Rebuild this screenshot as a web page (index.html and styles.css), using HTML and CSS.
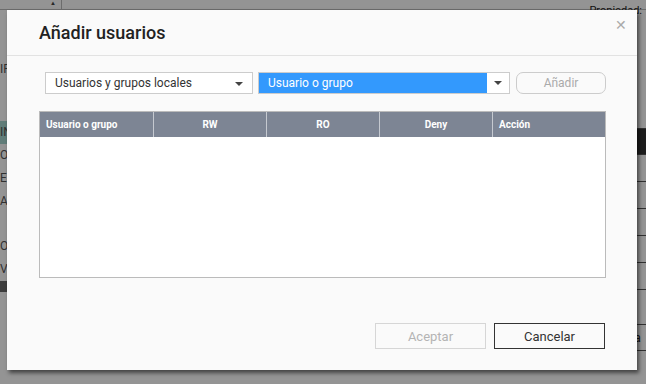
FILE: index.html
```html
<!doctype html>
<html>
<head>
<meta charset="utf-8">
<title>Añadir usuarios</title>
<link rel="stylesheet" href="styles.css">
</head>
<body>
<div class="backdrop">
	<div class="topbar">
		<span class="sort">&#9650;</span>
		<span class="prop">Propiedad:</span>
	</div>
	<div class="bg-main">
		<ul class="side">
			<li class="gap1">IP</li>
			<li class="sel">IN</li>
			<li>OF</li>
			<li>E</li>
			<li>AI</li>
			<li class="gap2">OI</li>
			<li>V</li>
			<li class="band"></li>
		</ul>
		<ul class="rows">
			<li class="r1"></li>
			<li class="dark"></li>
			<li></li>
			<li></li>
			<li></li>
			<li></li>
			<li></li>
			<li class="r2"></li>
			<li class="last">ca</li>
		</ul>
	</div>
	<div class="shade"></div>
</div>

<div class="dialog">
	<div class="dlg-head">
		<h2>Añadir usuarios</h2>
		<span class="close">&#10005;</span>
	</div>
	<div class="toolbar">
		<div class="select s1">
			<span>Usuarios y grupos locales</span>
			<i class="caret"></i>
		</div>
		<div class="select s2">
			<span class="val">Usuario o grupo</span>
			<span class="drop"><i class="caret"></i></span>
		</div>
		<button class="btn-add">Añadir</button>
	</div>
	<div class="grid">
		<div class="grid-head">
			<div class="col left">Usuario o grupo</div>
			<div class="col">RW</div>
			<div class="col">RO</div>
			<div class="col">Deny</div>
			<div class="col left">Acción</div>
		</div>
		<div class="grid-body"></div>
	</div>
	<div class="dlg-foot">
		<button class="btn ok">Aceptar</button>
		<button class="btn cancel">Cancelar</button>
	</div>
</div>
</body>
</html>
```

FILE: styles.css
```css
*{margin:0;padding:0;box-sizing:border-box}
body{background:#fff;font-family:Roboto,"Liberation Sans",sans-serif;width:646px;height:384px;overflow:hidden;position:relative}
ul{list-style:none}

/* page behind the dialog */
.backdrop{width:646px;height:384px;background:#fff;position:relative}
.topbar{height:10px;display:flex;align-items:flex-end;border-bottom:1px solid #bbb;padding-left:50px}
.topbar .sort{font-size:6px;color:#444;line-height:8px;width:12px;border-right:1px solid #bbb;height:10px}
.topbar .prop{margin-left:auto;font-size:11px;color:#222;line-height:12px;margin-right:4px;transform:translateY(8px)}
.bg-main{display:flex;justify-content:space-between}
.side{width:20px;font-size:12px;color:#555;padding-top:48px}
.side li{height:23px;line-height:23px;white-space:nowrap;overflow:hidden}
.side .gap1{margin-bottom:40px}
.side .sel{background:#a8d8d0}
.side .gap2{margin-top:22px}
.side li.band{height:11px;background:#6a6a6a;margin-top:0}
.rows{width:20px;padding-top:84px}
.rows li{height:27px;border-bottom:1px solid #555}
.rows .r1{height:35px}
.rows .dark{background:#333;height:26px}
.rows .r2{height:35px}
.rows .last{font-size:12px;color:#222;line-height:26px;height:26px;padding-left:2px}
.shade{position:absolute;left:0;top:0;right:0;bottom:0;background:rgba(0,0,0,0.42)}

/* dialog */
.dialog{position:absolute;left:7px;top:10px;width:630px;height:360px;background:#fafafa;box-shadow:2px 3px 4px rgba(0,0,0,0.55);display:flex;flex-direction:column}
.dlg-head{height:46px;border-bottom:1px solid #e2e2e2;display:flex;align-items:center;padding:0 10px 0 32px;position:relative}
.dlg-head h2{font-size:18px;font-weight:500;color:#222}
.close{position:absolute;right:10px;top:7px;font-size:14px;color:#aaa}

.toolbar{display:flex;align-items:center;padding:16px 31px 0 38px}
.select{height:22px;border:1px solid #ccc;background:#fff;display:flex;align-items:center;font-size:12px;color:#333;position:relative}
.s1{width:208px;padding-left:9px}
.s1 .caret{position:absolute;right:9px;top:9px}
.caret{display:block;width:0;height:0;border-left:4px solid transparent;border-right:4px solid transparent;border-top:4px solid #444}
.s2{width:252px;margin-left:5px}
.s2 .val{background:#3399fd;color:#fff;height:20px;line-height:20px;flex:1;padding-left:9px}
.s2 .drop{width:22px;height:20px;display:flex;align-items:center;justify-content:center}
.btn-add{margin-left:6px;width:90px;height:22px;border:1px solid #ccc;border-radius:7px;background:#fafafa;color:#aaa;font-family:inherit;font-size:12px}

.grid{margin:17px 31px 0 32px;height:167px;border:1px solid #bbb;background:#fff;display:flex;flex-direction:column}
.grid-head{height:25px;background:#7d8594;display:grid;grid-template-columns:repeat(5,minmax(0,1fr));color:#fff;font-size:10px;font-weight:bold}
.col{text-align:center;line-height:25px;border-left:1px solid #c5c9d0}
.col:first-child{border-left:0}
.col.left{text-align:left;padding-left:6px}
.grid-body{flex:1}

.dlg-foot{margin-top:auto;display:flex;justify-content:flex-end;gap:8px;padding:0 32px 21px 0}
.btn{width:111px;height:26px;background:#fafafa;font-family:inherit;font-size:13px}
.ok{border:1px solid #d6d6d6;color:#b4b4b4}
.cancel{border:1px solid #333;color:#333}
```
